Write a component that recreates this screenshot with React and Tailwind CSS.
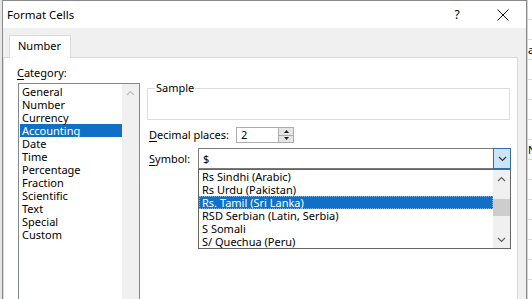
import React from 'react';

const categories = [
  'General',
  'Number',
  'Currency',
  'Accounting',
  'Date',
  'Time',
  'Percentage',
  'Fraction',
  'Scientific',
  'Text',
  'Special',
  'Custom',
];

const symbols = [
  'Rs Sindhi (Arabic)',
  'Rs Urdu (Pakistan)',
  'Rs. Tamil (Sri Lanka)',
  'RSD Serbian (Latin, Serbia)',
  'S Somali',
  'S/ Quechua (Peru)',
];

function Chevron({ up, color = '#606060' }) {
  return (
    <svg width="9" height="6" viewBox="0 0 9 6" fill="none">
      <path
        d={up ? 'M1 5 L4.5 1.5 L8 5' : 'M1 1 L4.5 4.5 L8 1'}
        stroke={color}
        strokeWidth="1.2"
      />
    </svg>
  );
}

function Tri({ up }) {
  return (
    <svg width="5" height="3" viewBox="0 0 5 3">
      <path d={up ? 'M0 3 L2.5 0 L5 3 Z' : 'M0 0 L2.5 3 L5 0 Z'} fill="#222" />
    </svg>
  );
}

export default function App() {
  return (
    <div className="w-[532px] h-[299px] overflow-hidden flex bg-white text-black text-[11px] leading-[14px] font-['Noto_Sans','Open_Sans',sans-serif]">
      {/* sheet behind, left edge */}
      <div className="w-[2px] shrink-0 bg-[#e6e6e6]" />

      {/* dialog */}
      <div className="w-[525px] shrink-0 flex flex-col border-x border-t border-[#8a8a8a] bg-[#f0f0f0]">
        {/* title bar */}
        <div className="h-[27px] shrink-0 flex items-center bg-white">
          <span className="pl-[4px] text-[11.5px]">Format Cells</span>
          <div className="ml-auto flex h-full">
            <div className="w-[46px] flex items-center justify-center text-[12px]">?</div>
            <div className="w-[46px] flex items-center justify-center">
              <svg width="12" height="12" viewBox="0 0 12 12">
                <path d="M0.5 0.5 L11.5 11.5 M11.5 0.5 L0.5 11.5" stroke="#111" strokeWidth="1" />
              </svg>
            </div>
          </div>
        </div>

        {/* tab strip */}
        <div className="pt-[7px] flex">
          <div className="relative z-10 -mb-[1px] ml-[6px] w-[62px] h-[23px] border-x border-t border-[#d9d9d9] bg-white pl-[8px] pt-[3px]">
            Number
          </div>
        </div>

        {/* tab panel */}
        <div className="w-[515px] flex-1 border border-[#d9d9d9] bg-white flex pl-[13px]">
          {/* category column */}
          <div className="w-[123px] shrink-0 flex flex-col pt-[8px]">
            <div className="h-[14px]">
              <span className="underline underline-offset-[2px]">C</span>ategory:
            </div>
            <div className="mt-[3px] ml-[1px] w-[122px] h-[230px] border border-[#828790] flex">
              <div className="w-[103px] pl-[1px] pt-[1px]">
                {categories.map((c) => (
                  <div
                    key={c}
                    className={`h-[13px] leading-[13px] pl-[2px] ${
                      c === 'Accounting' ? 'bg-[#1070c8] text-white' : ''
                    }`}
                  >
                    {c}
                  </div>
                ))}
              </div>
              <div className="w-[17px] bg-[#f0f0f0] flex flex-col">
                <div className="h-[17px] flex items-center justify-center">
                  <Chevron up color="#bfbfbf" />
                </div>
              </div>
            </div>
          </div>

          {/* right column */}
          <div className="ml-[7px] w-[364px] flex flex-col">
            <div className="relative mt-[30px] w-[363px] h-[32px] border border-[#dcdcdc]">
              <span className="absolute left-[7px] -top-[8px] bg-white px-[1px]">Sample</span>
            </div>

            <div className="mt-[7px] h-[16px] flex items-center">
              <span className="ml-[2px] w-[87px] whitespace-nowrap">
                <span className="underline underline-offset-[2px]">D</span>ecimal places:
              </span>
              <div className="w-[58px] h-[16px] border border-[#acacac] flex">
                <span className="flex-1 pl-[4px] leading-[14px]">2</span>
                <div className="w-[15px] flex flex-col border-l border-[#acacac]">
                  <div className="flex-1 bg-[#e6e6e6] border-b border-[#acacac] flex items-center justify-center">
                    <Tri up />
                  </div>
                  <div className="flex-1 bg-[#e6e6e6] flex items-center justify-center">
                    <Tri />
                  </div>
                </div>
              </div>
            </div>

            <div className="mt-[5px] h-[21px] flex items-center">
              <span className="ml-[2px] w-[49px] whitespace-nowrap">
                <span className="underline underline-offset-[2px]">S</span>ymbol:
              </span>
              <div className="relative w-[313px] h-[21px] flex">
                <div className="flex-1 border-y border-l border-[#7a7a7a] bg-white pl-[4px] leading-[19px]">$</div>
                <div className="w-[18px] border border-[#2f6ea8] bg-[#cce4f7] flex items-center justify-center">
                  <Chevron color="#333" />
                </div>

                {/* dropped list */}
                <div className="absolute left-0 top-[21px] z-20 w-[313px] h-[80px] border border-[#646464] bg-white flex">
                  <div className="w-[294px]">
                    {symbols.map((s) => (
                      <div
                        key={s}
                        className={`h-[13px] leading-[13px] pl-[3px] whitespace-nowrap ${
                          s === 'Rs. Tamil (Sri Lanka)'
                            ? 'bg-[#1070c8] text-white outline-1 outline-dotted -outline-offset-1 outline-[#7fb3e3]'
                            : ''
                        }`}
                      >
                        {s}
                      </div>
                    ))}
                  </div>
                  <div className="w-[17px] bg-[#f0f0f0] flex flex-col">
                    <div className="h-[17px] flex items-center justify-center">
                      <Chevron up />
                    </div>
                    <div className="flex-1 pt-[12px]">
                      <div className="h-[17px] bg-[#cdcdcd]" />
                    </div>
                    <div className="h-[17px] flex items-center justify-center">
                      <Chevron />
                    </div>
                  </div>
                </div>
              </div>
            </div>
          </div>
        </div>
      </div>

      {/* sheet behind, right edge */}
      <div className="flex-1 flex flex-col border-l border-[#d4d4d4] text-[11px]">
        {Array.from({ length: 15 }).map((_, i) => (
          <div key={i} className="h-[20px] shrink-0 border-b border-[#dadada] leading-[19px] overflow-hidden">
            {i === 2 ? 'a' : i === 7 ? 'N' : ''}
          </div>
        ))}
      </div>
    </div>
  );
}
